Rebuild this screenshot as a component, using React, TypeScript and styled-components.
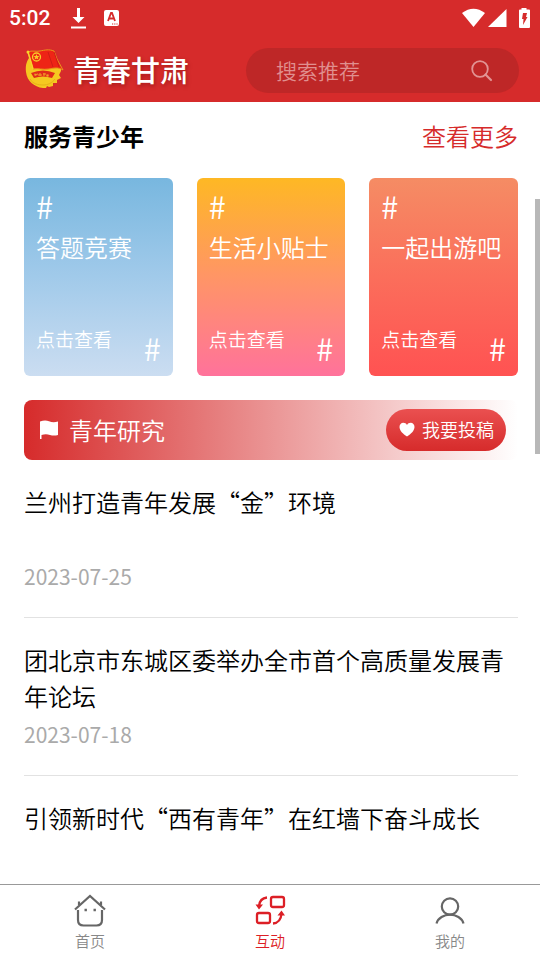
import React from 'react';
import styled, { createGlobalStyle } from 'styled-components';

const red = '#d62b2b';

const GlobalStyle = createGlobalStyle`
  * { box-sizing: border-box; }
  body {
    margin: 0;
    background: #fff;
    color: #000;
    font-family: 'Noto Sans CJK SC', 'Noto Sans', sans-serif;
    font-weight: 350;
  }
  button, input { font: inherit; }
  a { color: inherit; text-decoration: none; }
  svg { display: block; flex: none; }
`;

const Page = styled.div`
  display: flex;
  flex-direction: column;
  height: 100vh;
`;

const TopBar = styled.header`
  flex: none;
  background: ${red};
  color: #fff;
`;

const StatusBar = styled.div`
  display: flex;
  align-items: center;
  height: 36px;
  padding: 0 10px 0 9px;
`;

const Clock = styled.span`
  font: 500 21px/36px Roboto, sans-serif;
  margin-right: 21px;
`;

const StatusIcons = styled.div<{ $end?: boolean }>`
  display: flex;
  align-items: center;
  gap: ${p => (p.$end ? '3px' : '18px')};
  margin-left: ${p => (p.$end ? 'auto' : '0')};
`;

const BrandRow = styled.div`
  display: flex;
  align-items: center;
  justify-content: space-between;
  height: 66px;
  padding: 0 21px 0 24px;
`;

const Brand = styled.h1`
  display: flex;
  align-items: center;
  gap: 9px;
  margin: 0;
  font-size: 29px;
  line-height: 44px;
  font-weight: 500;
  text-shadow: 1px 2px 4px rgba(90, 0, 0, 0.4);
`;

const SearchBox = styled.label`
  display: flex;
  align-items: center;
  width: 273px;
  height: 45px;
  margin-top: 3px;
  padding: 0 26px 0 30px;
  border-radius: 23px;
  background: #be2727;
  color: #e29393;
`;

const SearchInput = styled.input`
  flex: 1;
  min-width: 0;
  padding: 0 0 2px;
  border: 0;
  outline: 0;
  background: transparent;
  color: #fff;
  font-size: 21px;
  line-height: 32px;
  &::placeholder { color: #e08f8f; opacity: 1; }
`;

const Content = styled.main`
  position: relative;
  flex: 1;
  min-height: 0;
  overflow: hidden;
  padding: 0 22px 0 24px;
`;

const ScrollThumb = styled.div`
  position: absolute;
  top: 97px;
  right: 0;
  width: 5px;
  height: 255px;
  background: #b8b8b8;
`;

const SectionHead = styled.div`
  display: flex;
  align-items: center;
  justify-content: space-between;
  height: 76px;
  padding-bottom: 8px;
  font-size: 24px;
  line-height: 36px;
`;

const SectionTitle = styled.h2`
  margin: 0;
  font-size: 24px;
  font-weight: 700;
`;

const MoreLink = styled.a`
  color: ${red};
`;

const Cards = styled.div`
  display: grid;
  grid-template-columns: repeat(3, 1fr);
  gap: 24px;
`;

const Card = styled.a<{ $from: string; $mid: string; $to: string }>`
  display: flex;
  flex-direction: column;
  justify-content: space-between;
  height: 198px;
  padding: 10px 12px;
  border-radius: 6px;
  background: linear-gradient(${p => p.$from}, ${p => p.$mid}, ${p => p.$to});
  color: #fff;
  white-space: nowrap;
`;

const Hash = styled.span`
  display: block;
  font-size: 31px;
  line-height: 36px;
`;

const CardTitle = styled.span`
  display: block;
  font-size: 24px;
  line-height: 46px;
`;

const CardFoot = styled.span`
  display: flex;
  align-items: flex-end;
  justify-content: space-between;
`;

const CardAction = styled.span`
  padding-bottom: 12px;
  font-size: 19px;
  line-height: 30px;
`;

const Banner = styled.div`
  display: flex;
  align-items: center;
  height: 60px;
  margin-top: 24px;
  padding: 0 12px 0 15px;
  border-radius: 8px;
  background: linear-gradient(90deg, ${red}, #fff);
  color: #fff;
`;

const BannerTitle = styled.h2`
  margin: 0 auto 0 10px;
  font-size: 24px;
  line-height: 36px;
  font-weight: 350;
`;

const SubmitButton = styled.button`
  display: flex;
  align-items: center;
  gap: 7px;
  height: 42px;
  padding: 0 12px 2px 13px;
  border: 0;
  border-radius: 21px;
  background: linear-gradient(#ea5050, ${red});
  color: #fff;
  font-size: 18px;
  line-height: 28px;
`;

const NewsList = styled.ul`
  margin: 0;
  padding: 0;
  list-style: none;
`;

const NewsItem = styled.li`
  padding: 24px 0 21px;
  border-bottom: 1px solid #e2e2e2;
`;

const NewsTitle = styled.a`
  display: block;
  min-height: 72px;
  font-size: 24px;
  line-height: 36px;
`;

const NewsDate = styled.time`
  display: block;
  color: #aaa;
  font-size: 21px;
  line-height: 40px;
  font-weight: 400;
`;

const TabBar = styled.nav`
  display: flex;
  flex: none;
  height: 76px;
  border-top: 1px solid #999;
  background: #fff;
`;

const Tab = styled.a<{ $active?: boolean }>`
  display: flex;
  flex: 1;
  flex-direction: column;
  align-items: center;
  padding-top: 8px;
  color: ${p => (p.$active ? '#dc1f26' : '#666')};
`;

const TabLabel = styled.span<{ $active?: boolean }>`
  font-size: 15px;
  line-height: 24px;
  margin-top: 2px;
  color: ${p => (p.$active ? '#dc1f26' : '#888')};
`;

const Logo = () => (
  <svg width="40" height="42" viewBox="0 0 40 42" aria-hidden="true">
    <path d="M8 7C3 11 1 17 2 24c1 9 8 15 17 16l3 0 1-2 2 1 4-1 0-3 4 0 0-3 4-2-2-3 2-4V20H12z" fill="#f5c820" />
    <path d="M6 31c3 5 8 6 13 6s9-2 12-6" fill="none" stroke="#e8ae18" strokeWidth="1" />
    <path d="M4 4c4-2 8 0 12-1 5-1 9-2 14 0l3 8 6 11c-5-3-9-2-14-1-6 1-11-1-16 0z" fill="#ee2416" stroke="#e8941b" strokeWidth="1" />
    <path d="M24 4l5 15M30 4l5 15" stroke="#d01c16" strokeWidth="1" fill="none" />
    <path d="M4 4l5 17" stroke="#f8d42b" strokeWidth="1.500" />
    <circle cx="12.500" cy="9" r="4" fill="none" stroke="#f8c928" strokeWidth="1.300" />
    <path d="M12.500 6l.8 2 2.200.1-1.700 1.400.6 2.100-1.900-1.200-1.900 1.200.6-2.100-1.700-1.400 2.200-.1z" fill="#f8c928" />
    <path d="M7 25q12-5 24 0l-3 5q-9-3-18 0z" fill="#e02b19" />
    <path d="M11 25.500l1 2.500m-2-1 4-1m2-1v3m-2-1h4m2-2v3m-1-2h3m2 0-1 3m-1-2 3 1" stroke="#f3a226" strokeWidth="1" fill="none" />
    <circle cx="4" cy="4" r="1.500" fill="#f8d42b" />
  </svg>
);

const DownloadIcon = () => (
  <svg width="15" height="21" viewBox="0 0 15 21" fill="#fff" aria-hidden="true">
    <path d="M6 0h3v9h4.500l-6 6-6-6H6zM0 18.500h15V20.500H0z" />
  </svg>
);

const KeyboardIcon = () => (
  <svg width="15" height="16" viewBox="0 0 15 16" aria-hidden="true">
    <rect width="15" height="16" rx="2" fill="#fff" />
    <path d="M4 11l3-8h1l3 8M5.500 8.500h4" fill="none" stroke={red} strokeWidth="1.800" />
    <path d="M8 14h1.200m1 0h1.200m1 0h1.200" stroke={red} strokeWidth="1.200" />
  </svg>
);

const WifiIcon = () => (
  <svg width="23" height="20" viewBox="0 0 23 20" fill="#fff" aria-hidden="true">
    <path d="M0 5Q11.500-3.500 23 5L11.500 19z" />
  </svg>
);

const SignalIcon = () => (
  <svg width="19" height="20" viewBox="0 0 19 20" fill="#fff" aria-hidden="true">
    <path d="M18.500 1v18H0z" />
  </svg>
);

const BatteryIcon = () => (
  <svg width="20" height="20" viewBox="0 0 20 20" aria-hidden="true">
    <path d="M11.500 0h5v1.500H19a1 1 0 0 1 1 1V19a1 1 0 0 1-1 1h-9a1 1 0 0 1-1-1V2.500a1 1 0 0 1 1-1h1.500z" fill="#fff" />
    <path d="M13 5h4l-1 4h1.500l-4.500 8 .5-6H12z" fill={red} />
  </svg>
);

const SearchIcon = () => (
  <svg width="22" height="22" viewBox="0 0 22 22" fill="none" stroke="currentColor" strokeWidth="1.800" strokeLinecap="round" aria-hidden="true">
    <circle cx="9" cy="9" r="7.800" />
    <path d="M14.500 14.500l5.500 5.500" strokeWidth="2.200" />
  </svg>
);

const FlagIcon = () => (
  <svg width="20" height="20" viewBox="0 0 20 20" fill="#fff" aria-hidden="true">
    <path d="M1 1.500Q6-.5 10 1.200T19 1.500V15q-4 1-8 0-4-1.500-8.500 0v4H1z" />
  </svg>
);

const HeartIcon = () => (
  <svg width="16" height="15" viewBox="0 0 16 15" fill="#fff" aria-hidden="true">
    <path d="M8 14.500C4 12 .5 8.500.5 5 .5 2.500 2.200.8 4.300.8 6 .8 7.300 1.600 8 3 8.700 1.600 10 .8 11.700.8c2.100 0 3.800 1.700 3.800 4.200 0 3.500-3.500 7-7.500 9.500z" />
  </svg>
);

const HomeIcon = () => (
  <svg width="34" height="34" viewBox="0 0 34 34" fill="none" stroke="currentColor" strokeWidth="2.200" aria-hidden="true">
    <path d="M2 16.500L17 3l15 13.500M6 12V8.500M28 12V8.500" />
    <path d="M5 17v10q0 5.500 5.500 5.500h13q5.500 0 5.500-5.500V17" />
    <path d="M11.500 17h2.400M20.500 17h2.400" strokeWidth="2.400" />
  </svg>
);

const ExchangeIcon = () => (
  <svg width="34" height="34" viewBox="0 0 34 34" fill="none" stroke="currentColor" strokeWidth="2.300" aria-hidden="true">
    <rect x="18" y="4" width="13" height="10" rx="2" />
    <rect x="4" y="20" width="13" height="10" rx="2" />
    <path d="M14 4.500C9 5 6.500 8 6 13" />
    <path d="M20 30.500c5-.5 8-4 8.500-9.500" />
    <path d="M2.500 11.500h7.500L6 16.500zM24.500 22.500h7.500L28.500 17.500z" fill="currentColor" stroke="none" />
  </svg>
);

const PersonIcon = () => (
  <svg width="34" height="34" viewBox="0 0 34 34" fill="none" stroke="currentColor" strokeWidth="2.200" aria-hidden="true">
    <circle cx="17" cy="13.500" r="8.200" />
    <path d="M3.500 30.500C5 25 11 21.700 17 21.700s12 3.300 13.500 8.800" />
  </svg>
);

const cards = [
  { title: '答题竞赛', from: '#78b7df', mid: '#a1caea', to: '#cbddf1' },
  { title: '生活小贴士', from: '#feb824', mid: '#ff9566', to: '#ff729b' },
  { title: '一起出游吧', from: '#f58c64', mid: '#fb6e5b', to: '#ff5252' },
];

const news = [
  { title: '兰州打造青年发展“金”环境', date: '2023-07-25' },
  { title: '团北京市东城区委举办全市首个高质量发展青年论坛', date: '2023-07-18' },
  { title: '引领新时代“西有青年”在红墙下奋斗成长', date: '' },
];

const tabs = [
  { label: '首页', Icon: HomeIcon, active: false },
  { label: '互动', Icon: ExchangeIcon, active: true },
  { label: '我的', Icon: PersonIcon, active: false },
];

export default function App() {
  return (
    <Page lang="zh-CN">
      <GlobalStyle />
      <TopBar>
        <StatusBar>
          <Clock>5:02</Clock>
          <StatusIcons>
            <DownloadIcon />
            <KeyboardIcon />
          </StatusIcons>
          <StatusIcons $end>
            <WifiIcon />
            <SignalIcon />
            <BatteryIcon />
          </StatusIcons>
        </StatusBar>
        <BrandRow>
          <Brand>
            <Logo />
            青春甘肃
          </Brand>
          <SearchBox>
            <SearchInput type="text" placeholder="搜索推荐" aria-label="搜索推荐" />
            <SearchIcon />
          </SearchBox>
        </BrandRow>
      </TopBar>
      <Content>
        <SectionHead>
          <SectionTitle>服务青少年</SectionTitle>
          <MoreLink href="#more">查看更多</MoreLink>
        </SectionHead>
        <Cards>
          {cards.map(c => (
            <Card key={c.title} href="#topic" $from={c.from} $mid={c.mid} $to={c.to}>
              <span>
                <Hash>#</Hash>
                <CardTitle>{c.title}</CardTitle>
              </span>
              <CardFoot>
                <CardAction>点击查看</CardAction>
                <Hash>#</Hash>
              </CardFoot>
            </Card>
          ))}
        </Cards>
        <Banner>
          <FlagIcon />
          <BannerTitle>青年研究</BannerTitle>
          <SubmitButton type="button">
            <HeartIcon />
            我要投稿
          </SubmitButton>
        </Banner>
        <NewsList>
          {news.map(n => (
            <NewsItem key={n.title}>
              <NewsTitle href="#article">{n.title}</NewsTitle>
              {n.date && <NewsDate dateTime={n.date}>{n.date}</NewsDate>}
            </NewsItem>
          ))}
        </NewsList>
        <ScrollThumb />
      </Content>
      <TabBar>
        {tabs.map(({ label, Icon, active }) => (
          <Tab key={label} href="#tab" $active={active} aria-current={active ? 'page' : undefined}>
            <Icon />
            <TabLabel $active={active}>{label}</TabLabel>
          </Tab>
        ))}
      </TabBar>
    </Page>
  );
}
